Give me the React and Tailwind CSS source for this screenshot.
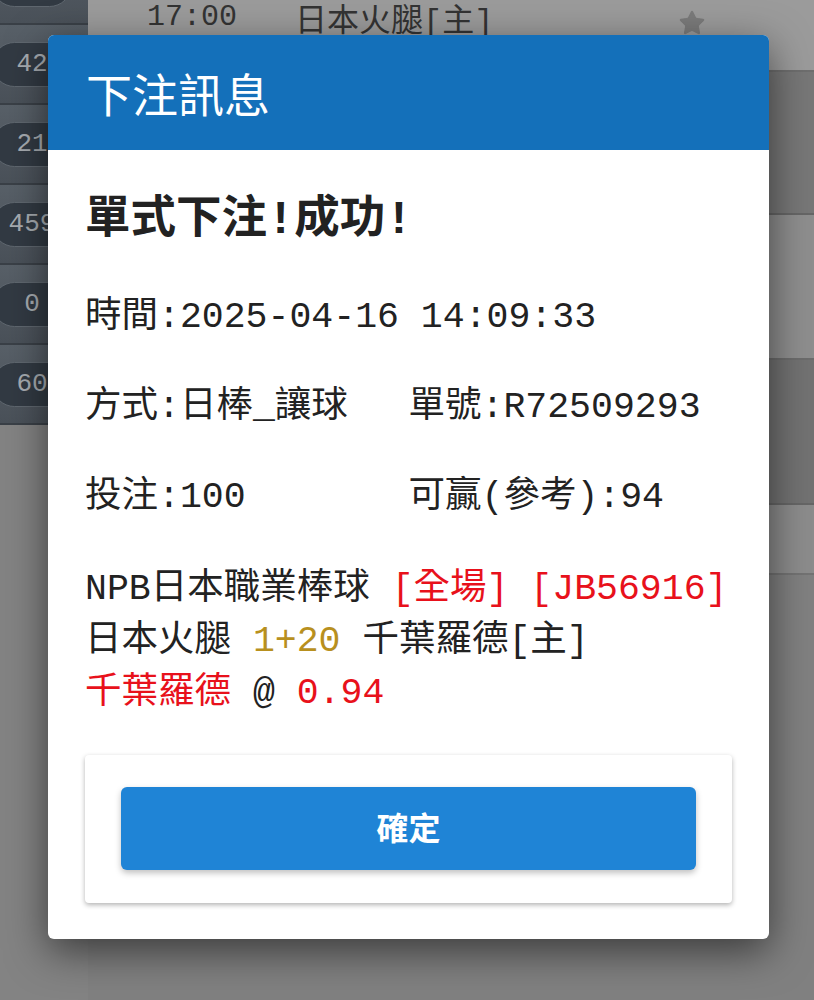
import { Star } from "lucide-react";

const pills = ["", "42", "21", "459", "0", "60"];

function Background() {
    return (
        <div className="flex h-full w-full">
            <div className="flex w-[88px] flex-col">
                <div className="-mt-[55px] flex flex-col">
                    {pills.map((n, i) => (
                        <div
                            key={i}
                            className="flex h-[80px] items-center border-b-2 border-[#3a4047] bg-gradient-to-b from-[#586068] to-[#4a5159]"
                        >
                            <div className="-ml-[8px] flex h-[45px] w-[80px] items-center justify-center rounded-full border border-[#5f676f] bg-[#323a43] font-['Liberation_Mono',monospace] text-[26px] text-[#a7acb1]">
                                {n}
                            </div>
                        </div>
                    ))}
                </div>
                <div className="flex-1 bg-[#838383]" />
            </div>
            <div className="flex flex-1 flex-col">
                <div className="flex h-[72px] items-start border-b-2 border-[#6e6e6e] bg-[#9b9b9b] pl-[59px] text-[#333]">
                    <span className="font-['Liberation_Mono',monospace] text-[30px] leading-[34px]">
                        17:00
                    </span>
                    <span className="ml-[58px] mt-[6px] font-['Liberation_Mono','Noto_Sans_CJK_TC',sans-serif] text-[32px] leading-[34px]">
                        日本火腿[主]
                    </span>
                    <Star
                        className="ml-auto mr-[108px] mt-[9px] h-[28px] w-[28px] text-[#7b7b7b]"
                        fill="#7b7b7b"
                        strokeWidth={1}
                    />
                </div>
                <div className="h-[143px] border-b-2 border-[#666] bg-[#777777]" />
                <div className="h-[145px] border-b-2 border-[#6c6c6c] bg-[#8e8e8e]" />
                <div className="h-[145px] border-b-2 border-[#666] bg-[#727272]" />
                <div className="h-[70px] border-b-2 border-[#737373] bg-[#8c8c8c]" />
                <div className="flex-1 bg-[#808080]" />
            </div>
        </div>
    );
}

export default function App() {
    return (
        <div className="relative h-[1000px] w-[814px] overflow-hidden bg-[#808080]">
            <Background />

            <div className="absolute left-[48px] top-[35px] w-[721px] overflow-hidden rounded-[6px] bg-white shadow-[0_12px_40px_rgba(0,0,0,0.55)]">
                <div className="flex h-[115px] items-center bg-[#1470ba] px-[38px] font-['Noto_Sans_CJK_TC',sans-serif] text-[46px] text-white">
                    下注訊息
                </div>

                <div className="px-[37px] pb-[36px] pt-[41px] font-['Liberation_Mono','Noto_Sans_CJK_TC',monospace] text-[#222]">
                    <div className="whitespace-nowrap text-[45.5px] font-bold leading-[60px]">
                        單式下注!成功!
                    </div>

                    <div className="mt-[22px] grid grid-cols-2 whitespace-nowrap text-[36.5px] leading-[90px]">
                        <div className="col-span-2">時間:2025-04-16 14:09:33</div>
                        <div>方式:日棒_讓球</div>
                        <div>單號:R72509293</div>
                        <div>投注:100</div>
                        <div>可贏(參考):94</div>
                    </div>

                    <div className="mt-[21px] whitespace-nowrap text-[36.5px] leading-[52px]">
                        <div>
                            NPB日本職業棒球{" "}
                            <span className="text-[#e8111b]">[全場]</span>{" "}
                            <span className="text-[#e8111b]">[JB56916]</span>
                        </div>
                        <div>
                            日本火腿 <span className="text-[#b8901e]">1+20</span> 千葉羅德[主]
                        </div>
                        <div>
                            <span className="text-[#e8111b]">千葉羅德</span> @{" "}
                            <span className="text-[#e8111b]">0.94</span>
                        </div>
                    </div>

                    <div className="mt-[35px] rounded-[4px] bg-white px-[36px] pb-[33px] pt-[32px] shadow-[0_2px_5px_rgba(0,0,0,0.3)]">
                        <button className="flex h-[83px] w-full items-center justify-center rounded-[6px] bg-[#1f84d6] pb-[6px] font-['Noto_Sans_CJK_TC',sans-serif] text-[32px] font-bold text-white shadow-[0_3px_6px_rgba(0,0,0,0.25)]">
                            確定
                        </button>
                    </div>
                </div>
            </div>
        </div>
    );
}
